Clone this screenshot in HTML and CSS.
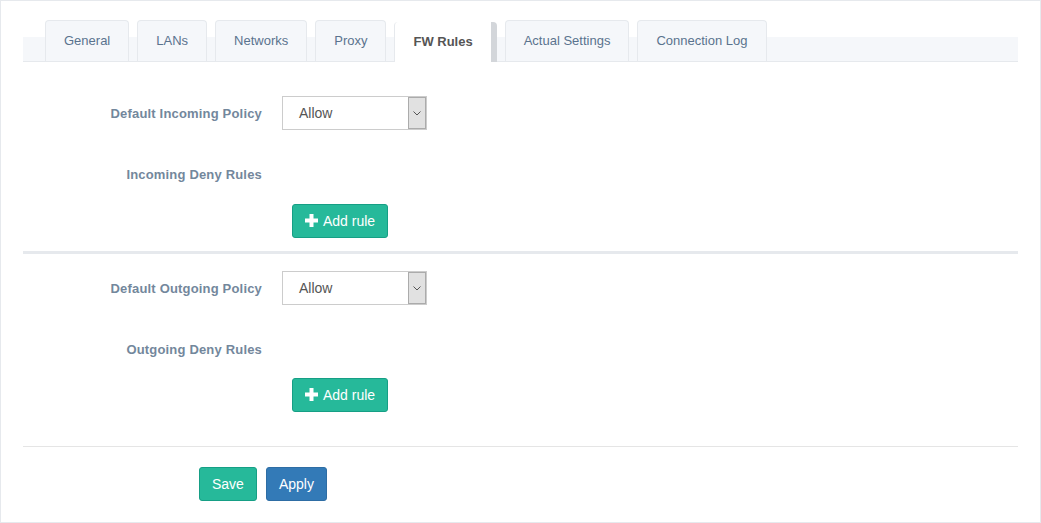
FILE: index.html
```html
<!DOCTYPE html>
<html>
<head>
<meta charset="utf-8">
<title>FW Rules</title>
<link rel="stylesheet" href="styles.css">
</head>
<body>
<div class="page">
  <ul class="tabs">
    <li class="tab">General</li>
    <li class="tab">LANs</li>
    <li class="tab">Networks</li>
    <li class="tab">Proxy</li>
    <li class="tab active">FW Rules</li>
    <li class="tab">Actual Settings</li>
    <li class="tab">Connection Log</li>
  </ul>

  <form class="form">
    <div class="row row-policy">
      <label class="label">Default Incoming Policy</label>
      <div class="select"><span class="select-value">Allow</span><span class="select-arrow"><svg width="8" height="5" viewBox="0 0 8 5"><path d="M0.5 0.5 L4 4 L7.5 0.5" fill="none" stroke="#555" stroke-width="1"/></svg></span></div>
    </div>
    <div class="row row-rules">
      <label class="label">Incoming Deny Rules</label>
      <div></div>
    </div>
    <div class="row row-add">
      <div></div>
      <div class="add-cell"><button type="button" class="btn btn-success btn-add"><svg class="plus" width="13" height="13" viewBox="0 0 13 13"><rect x="4.5" y="0" width="4" height="13" fill="#fff"/><rect x="0" y="4.5" width="13" height="4" fill="#fff"/></svg>Add rule</button></div>
    </div>

    <div class="sep"></div>

    <div class="row row-policy2">
      <label class="label">Default Outgoing Policy</label>
      <div class="select"><span class="select-value">Allow</span><span class="select-arrow"><svg width="8" height="5" viewBox="0 0 8 5"><path d="M0.5 0.5 L4 4 L7.5 0.5" fill="none" stroke="#555" stroke-width="1"/></svg></span></div>
    </div>
    <div class="row row-rules">
      <label class="label">Outgoing Deny Rules</label>
      <div></div>
    </div>
    <div class="row row-add2">
      <div></div>
      <div class="add-cell"><button type="button" class="btn btn-success btn-add"><svg class="plus" width="13" height="13" viewBox="0 0 13 13"><rect x="4.5" y="0" width="4" height="13" fill="#fff"/><rect x="0" y="4.5" width="13" height="4" fill="#fff"/></svg>Add rule</button></div>
    </div>

    <div class="ln"></div>

    <div class="footer">
      <button type="button" class="btn btn-success">Save</button>
      <button type="button" class="btn btn-primary">Apply</button>
    </div>
  </form>
</div>
</body>
</html>
```

FILE: styles.css
```css
* { box-sizing: border-box; }

html, body {
  margin: 0;
  padding: 0;
  background: #fff;
}

body {
  font-family: "Liberation Sans", Arial, sans-serif;
  font-size: 13px;
  color: #73879C;
}

.page {
  width: 1041px;
  height: 523px;
  border: 1px solid #E6E9ED;
  padding: 19px 22px 0;
}

/* Tabs */
.tabs {
  list-style: none;
  margin: 0;
  padding: 0 0 0 14px;
  display: flex;
  align-items: flex-end;
  height: 42px;
  border-bottom: 1px solid #E6E9ED;
  background: linear-gradient(to bottom, transparent 17px, #F5F7FA 17px);
}

.tab {
  margin-left: 8px;
  border: 1px solid #E6E9ED;
  border-bottom: none;
  border-radius: 4px 4px 0 0;
  background: #F5F7FA;
  padding: 10px 18px;
  line-height: 20px;
  font-size: 13px;
  color: #5A738E;
  white-space: nowrap;
}

.tab.active {
  border-top: 0;
  border-right: 6px solid #D3D6DA;
  background: #fff;
  color: #555;
  font-weight: bold;
  margin-bottom: -1px;
}

/* Form */
.form {
  margin: 0;
}

.row {
  display: grid;
  grid-template-columns: 239px 1fr;
  column-gap: 20px;
  align-items: center;
  min-height: 34px;
}

.row-policy { margin-top: 34px; }
.row-rules { margin-top: 27px; }
.row-add { margin-top: 13px; }
.row-policy2 { margin-top: 17px; }
.row-add2 { margin-top: 12px; }

.label {
  text-align: right;
  font-weight: bold;
  font-size: 13px;
  letter-spacing: 0.18px;
  color: #73879C;
}

.select {
  width: 145px;
  height: 34px;
  border: 1px solid #ccc;
  background: #fff;
  display: flex;
  align-items: stretch;
}

.select-value {
  flex: 1;
  padding-left: 16px;
  font-size: 14px;
  line-height: 32px;
  color: #555;
}

.select-arrow {
  width: 18px;
  border: 1px solid #ABABAB;
  background: #E1E1E1;
  display: flex;
  align-items: center;
  justify-content: center;
}

.add-cell {
  padding-left: 10px;
}

.btn {
  font-family: "Liberation Sans", Arial, sans-serif;
  font-size: 14px;
  line-height: 20px;
  padding: 6px 12px;
  border-radius: 3px;
  border: 1px solid transparent;
  color: #fff;
  cursor: pointer;
  display: inline-flex;
  align-items: center;
  height: 34px;
}

.btn-success {
  background: #26B99A;
  border-color: #169F85;
}

.btn-primary {
  background: #337AB7;
  border-color: #2E6DA4;
}

.btn-add {
  padding-left: 12px;
  padding-right: 12px;
}

.plus {
  margin-right: 5px;
  margin-top: -1px;
}

.sep {
  margin-top: 13px;
  height: 3px;
  background: #E6E9ED;
}

.ln {
  margin-top: 34px;
  height: 1px;
  background: #E5E5E5;
}

.footer {
  margin-top: 20px;
  padding-left: 176px;
  display: flex;
  gap: 9px;
}
```
